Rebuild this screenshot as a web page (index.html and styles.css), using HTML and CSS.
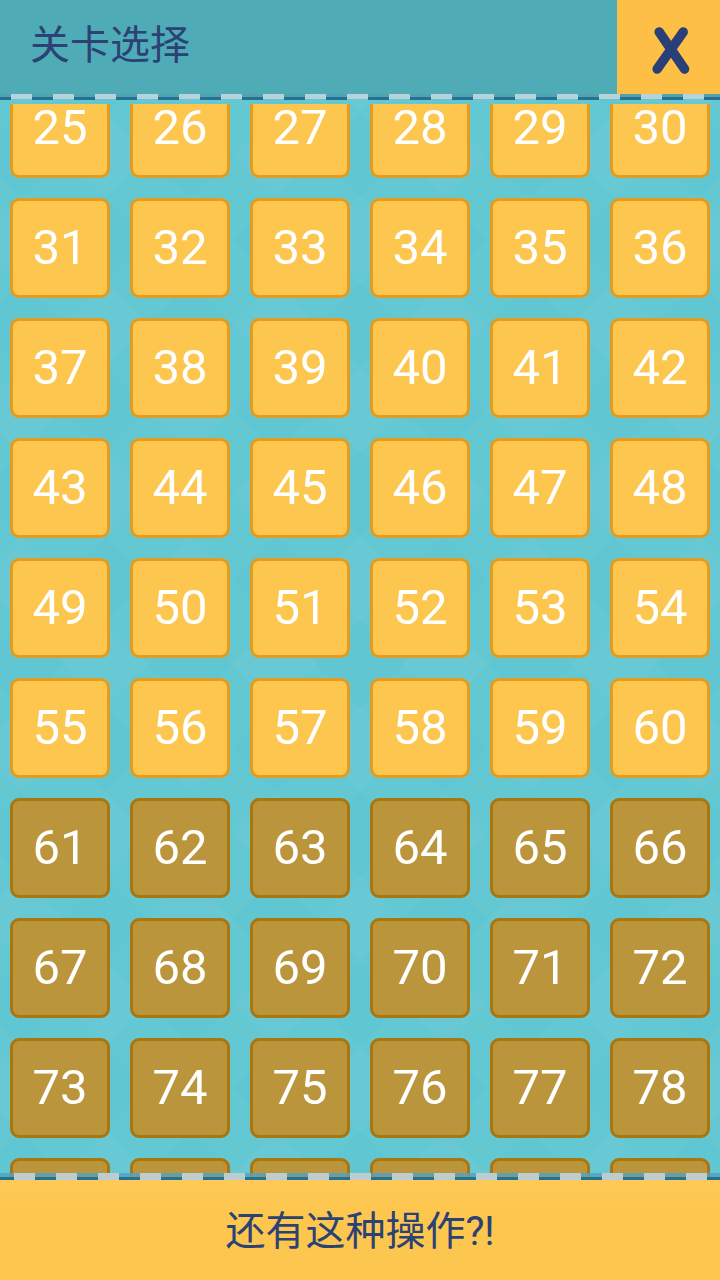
FILE: index.html
```html
<!DOCTYPE html>
<html lang="zh-CN">
<head>
    <meta charset="UTF-8">
    <meta name="viewport" content="width=device-width, initial-scale=1.0">
    <title>关卡选择</title>
    <link rel="stylesheet" href="styles.css">
</head>
<body>
    <header class="top-bar">
        <h1 class="title">关卡选择</h1>
        <button class="close-btn" aria-label="关闭">
            <svg width="44" height="56" viewBox="0 0 44 56">
                <path d="M12.2 13 L37.5 50 M36.2 13 L10.2 50" fill="none" stroke="#2a3f78" stroke-width="9.5" stroke-linecap="round"/>
            </svg>
        </button>
    </header>

    <main class="level-scroll">
        <div class="level-grid">
            <div class="level">25</div>
            <div class="level">26</div>
            <div class="level">27</div>
            <div class="level">28</div>
            <div class="level">29</div>
            <div class="level">30</div>
            <div class="level">31</div>
            <div class="level">32</div>
            <div class="level">33</div>
            <div class="level">34</div>
            <div class="level">35</div>
            <div class="level">36</div>
            <div class="level">37</div>
            <div class="level">38</div>
            <div class="level">39</div>
            <div class="level">40</div>
            <div class="level">41</div>
            <div class="level">42</div>
            <div class="level">43</div>
            <div class="level">44</div>
            <div class="level">45</div>
            <div class="level">46</div>
            <div class="level">47</div>
            <div class="level">48</div>
            <div class="level">49</div>
            <div class="level">50</div>
            <div class="level">51</div>
            <div class="level">52</div>
            <div class="level">53</div>
            <div class="level">54</div>
            <div class="level">55</div>
            <div class="level">56</div>
            <div class="level">57</div>
            <div class="level">58</div>
            <div class="level">59</div>
            <div class="level">60</div>
            <div class="level locked">61</div>
            <div class="level locked">62</div>
            <div class="level locked">63</div>
            <div class="level locked">64</div>
            <div class="level locked">65</div>
            <div class="level locked">66</div>
            <div class="level locked">67</div>
            <div class="level locked">68</div>
            <div class="level locked">69</div>
            <div class="level locked">70</div>
            <div class="level locked">71</div>
            <div class="level locked">72</div>
            <div class="level locked">73</div>
            <div class="level locked">74</div>
            <div class="level locked">75</div>
            <div class="level locked">76</div>
            <div class="level locked">77</div>
            <div class="level locked">78</div>
            <div class="level locked">79</div>
            <div class="level locked">80</div>
            <div class="level locked">81</div>
            <div class="level locked">82</div>
            <div class="level locked">83</div>
            <div class="level locked">84</div>
        </div>
    </main>

    <footer class="bottom-bar">还有这种操作?!</footer>
</body>
</html>
```

FILE: styles.css
```css
html, body {
    height: 100%;
}

body {
    margin: 0;
    height: 1280px;
    overflow: hidden;
    display: flex;
    flex-direction: column;
    font-family: Roboto, "Noto Sans CJK SC", sans-serif;
    background-color: #60c7d2;
    background-image:
        repeating-linear-gradient(45deg, rgba(255, 255, 255, 0.025) 0 60px, transparent 60px 120px),
        repeating-linear-gradient(-45deg, rgba(255, 255, 255, 0.025) 0 60px, transparent 60px 120px);
}

/* top bar */
.top-bar {
    position: relative;
    flex: none;
    height: 94px;
    display: flex;
    align-items: stretch;
    justify-content: space-between;
    background: #4fabb6;
}

/* stitched seams on both bars */
.top-bar::after,
.bottom-bar::before {
    content: "";
    position: absolute;
    left: 0;
    right: 0;
    z-index: 2;
    background-repeat: repeat-x;
}

.top-bar::after {
    top: 94px;
    height: 6px;
    background-image:
        linear-gradient(90deg, transparent 11px, #b7d2db 11px 32px, transparent 32px),
        linear-gradient(90deg, #27708f 0 11px, transparent 11px 32px, #27708f 32px),
        linear-gradient(90deg, #4fa3b3 0 11px, transparent 11px 32px, #4fa3b3 32px);
    background-size: 42px 5px, 42px 3px, 42px 3px;
    background-position: 0 0, 0 3px, 0 0;
}

.title {
    margin: 0;
    padding-left: 30px;
    font-size: 40px;
    font-weight: 400;
    line-height: 92px;
    color: #2c4274;
}

.close-btn {
    width: 103px;
    padding: 0;
    border: none;
    display: flex;
    align-items: center;
    justify-content: center;
    background: #fdbf45;
}

/* level list, scrolled part way down */
.level-scroll {
    flex: 1;
    min-height: 0;
    margin-top: 10px;
    overflow: hidden;
}

.level-grid {
    display: grid;
    grid-template-columns: repeat(6, 100px);
    grid-auto-rows: 100px;
    gap: 20px;
    justify-content: center;
    margin-top: -26px;
}

.level {
    box-sizing: border-box;
    display: flex;
    align-items: center;
    justify-content: center;
    padding-bottom: 2px;
    font-size: 49px;
    color: #fff;
    background: #fdc74f;
    border: 3px solid #e39c20;
    border-radius: 9px;
}

.level.locked {
    background: #bb953c;
    border-color: #a9760f;
}

/* bottom bar */
.bottom-bar {
    position: relative;
    flex: none;
    height: 100px;
    line-height: 104px;
    text-align: center;
    font-size: 40px;
    color: #2c4274;
    background: linear-gradient(#fec957, #fdc74f 30px);
}

.bottom-bar::before {
    top: -7px;
    height: 7px;
    background-image:
        linear-gradient(90deg, transparent 14px, #bccdd2 14px 35px, transparent 35px),
        linear-gradient(90deg, #27708f 0 14px, transparent 14px 35px, #27708f 35px),
        linear-gradient(90deg, rgba(84, 160, 190, 0.8) 0 14px, transparent 14px 35px, rgba(84, 160, 190, 0.8) 35px);
    background-size: 42px 100%, 42px 3px, 42px 4px;
    background-position: 0 0, 0 4px, 0 0;
}
```
